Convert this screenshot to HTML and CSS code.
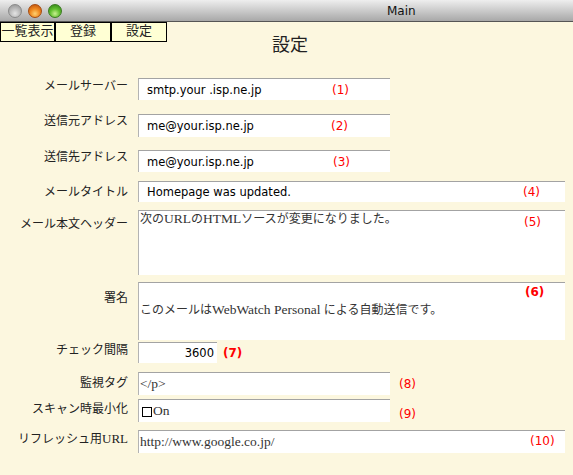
FILE: index.html
```html
<!DOCTYPE html>
<html lang="ja">
<head>
<meta charset="utf-8">
<title>Main</title>
<link rel="stylesheet" href="styles.css">
</head>
<body>
<div class="titlebar">
  <span class="light light-gray"></span>
  <span class="light light-orange"></span>
  <span class="light light-green"></span>
  <span class="title">Main</span>
</div>
<div class="header">
  <nav class="tabs">
    <div class="tab tab-first">一覧表示</div>
    <div class="tab">登録</div>
    <div class="tab">設定</div>
  </nav>
  <h1 class="heading">設定</h1>
</div>
<div class="form">
  <div class="label pad-1">メールサーバー</div>
  <div class="cell">
    <div class="field w-short h22 sans">smtp.your .isp.ne.jp<span class="tag tag-1">(1)</span></div>
  </div>

  <div class="label pad-0">送信元アドレス</div>
  <div class="cell">
    <div class="field w-short h23 sans">me@your.isp.ne.jp<span class="tag tag-2">(2)</span></div>
  </div>

  <div class="label pad-0">送信先アドレス</div>
  <div class="cell">
    <div class="field w-short h22 sans">me@your.isp.ne.jp<span class="tag tag-3">(3)</span></div>
  </div>

  <div class="label pad-4">メールタイトル</div>
  <div class="cell">
    <div class="field w-long h21 sans">Homepage was updated.<span class="tag tag-4">(4)</span></div>
  </div>

  <div class="label pad-7">メール本文ヘッダー</div>
  <div class="cell">
    <div class="field w-long h65 serif-text area"><span>次の<span class="lat">URL</span>の<span class="lat">HTML</span>ソースが変更になりました。</span><span class="tag tag-5">(5)</span></div>
  </div>

  <div class="label pad-9">署名</div>
  <div class="cell">
    <div class="field w-long h58 serif-text area sig"><span>このメールは<span class="lat">WebWatch Personal </span>による自動送信です。</span><span class="tag tag-6">(6)</span></div>
  </div>

  <div class="label pad-1">チェック間隔</div>
  <div class="cell">
    <div class="field w-tiny h21 sans num">3600</div>
    <span class="tag-after tag-7">(7)</span>
  </div>

  <div class="label pad-4">監視タグ</div>
  <div class="cell">
    <div class="field w-short h23 serif-text"><span class="lat">&lt;/p&gt;</span></div>
    <span class="tag-after tag-8">(8)</span>
  </div>

  <div class="label pad-3">スキャン時最小化</div>
  <div class="cell">
    <div class="field w-short h23 serif-text"><span class="check"></span><span class="lat">On</span></div>
    <span class="tag-after tag-9">(9)</span>
  </div>

  <div class="label pad-2">リフレッシュ用<span class="lat-label">URL</span></div>
  <div class="cell">
    <div class="field w-long h23 serif-text"><span class="lat">http://www.google.co.jp/</span><span class="tag tag-10">(10)</span></div>
  </div>
</div>
</body>
</html>
```

FILE: styles.css
```css
* { box-sizing: border-box; }
html, body { margin: 0; padding: 0; }
body {
  width: 573px;
  height: 475px;
  overflow: hidden;
  background: #fcf7df;
  font-family: "Liberation Serif", "Noto Sans CJK JP", serif;
  color: #222;
}

/* title bar */
.titlebar {
  height: 22px;
  display: flex;
  align-items: center;
  padding-left: 8px;
  background: linear-gradient(#eeeeee, #a8a8a8);
  border-bottom: 1px solid #555;
}
.light {
  width: 14px;
  height: 14px;
  border-radius: 50%;
  margin-right: 6px;
  flex: none;
}
.light-gray {
  background: radial-gradient(circle at 50% 70%, #e4e4e4 0%, #b4b4b4 55%, #8e8e8e 100%);
  border: 1px solid #8a8a8a;
}
.light-orange {
  background: radial-gradient(circle at 50% 72%, #ffd070 0%, #f08a20 45%, #b84808 100%);
  border: 1px solid #a54a10;
}
.light-green {
  background: radial-gradient(circle at 50% 72%, #c8f090 0%, #62c030 45%, #2e7c14 100%);
  border: 1px solid #3a7a20;
}
.title {
  margin-left: 319px;
  font-family: "DejaVu Sans", sans-serif;
  font-size: 12px;
  color: #111;
}

/* header: tabs + heading */
.header {
  display: flex;
  align-items: flex-start;
  height: 32px;
}
.tabs { display: flex; }
.tab {
  width: 56px;
  height: 20px;
  border: 1px solid #000;
  background: #ffffd4;
  font-size: 13px;
  line-height: 15px;
  text-align: center;
  color: #222;
  white-space: nowrap;
  overflow: hidden;
}
.tab-first { width: 55px; }
.heading {
  margin: 14px 0 0 105px;
  font-size: 18px;
  line-height: 18px;
  font-weight: normal;
  color: #222;
}

/* form grid */
.form {
  margin-top: 24px;
  display: grid;
  grid-template-columns: 128px auto;
  grid-template-rows: 36px 36px 31px 29px 72px 60px 30px 27px 31px 23px;
  column-gap: 10px;
}
.label {
  text-align: right;
  font-size: 12px;
  line-height: 14px;
  white-space: nowrap;
  color: #222;
}
.lat-label { font-size: 13px; }
.pad-0 { padding-top: 0; }
.pad-1 { padding-top: 1px; }
.pad-2 { padding-top: 2px; }
.pad-3 { padding-top: 3px; }
.pad-4 { padding-top: 4px; }
.pad-7 { padding-top: 7px; }
.pad-9 { padding-top: 9px; }

.cell {
  align-self: start;
  display: flex;
  align-items: center;
}

.field {
  position: relative;
  display: flex;
  align-items: center;
  background: #fff;
  border-top: 1px solid #a3a3a3;
  border-left: 1px solid #b3b3b3;
  white-space: nowrap;
}
.w-short { width: 252px; }
.w-long { width: 427px; }
.w-tiny { width: 79px; }
.h21 { height: 21px; }
.h22 { height: 22px; }
.h23 { height: 23px; }
.h58 { height: 58px; }
.h65 { height: 65px; }

.sans {
  font-family: "DejaVu Sans", sans-serif;
  font-size: 11.5px;
  color: #000;
  padding-left: 8px;
}
.serif-text {
  font-size: 12px;
  line-height: 14px;
  color: #333;
  padding-left: 1px;
}
.lat { font-size: 13.5px; }
.area {
  align-items: flex-start;
  padding-top: 1px;
}
.sig { padding-top: 20px; }
.num {
  justify-content: flex-end;
  padding-right: 3px;
  padding-left: 0;
}

.check {
  width: 10px;
  height: 10px;
  border: 1px solid #000;
  background: #fff;
  margin: 2px 1px 0 2px;
  flex: none;
}

/* red annotations */
.tag, .tag-after {
  font-family: "DejaVu Sans", sans-serif;
  font-size: 12px;
  line-height: 14px;
  color: #f00;
}
.tag { position: absolute; }
.tag-1 { left: 193px; top: 4px; }
.tag-2 { left: 192px; top: 4px; }
.tag-3 { left: 194px; top: 4px; }
.tag-4 { left: 384px; top: 3px; }
.tag-5 { left: 385px; top: 4px; }
.tag-6 { left: 386px; top: 2px; font-weight: bold; }
.tag-10 { left: 391px; top: 3px; }
.tag-7 { margin-left: 6px; font-weight: bold; }
.tag-8 { margin-left: 9px; }
.tag-9 { margin-left: 9px; margin-top: 7px; }
```
